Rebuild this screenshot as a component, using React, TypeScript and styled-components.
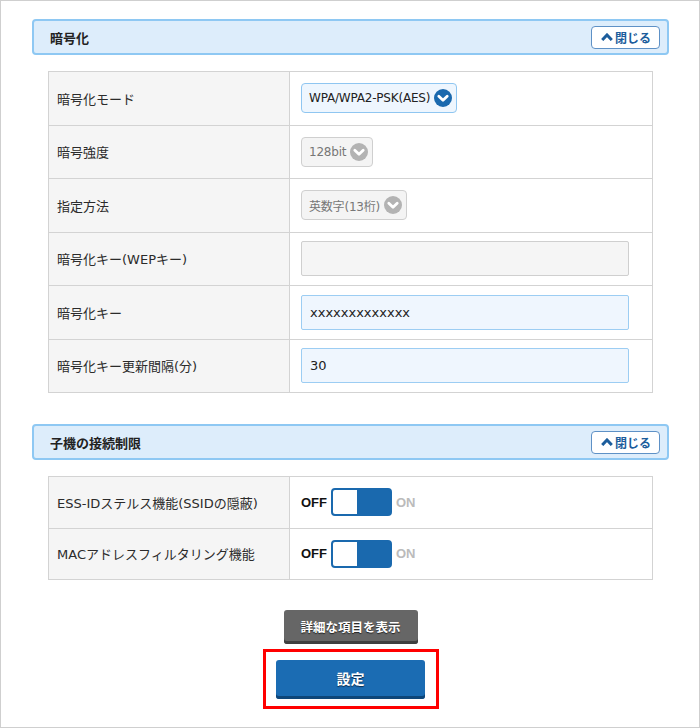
import styled, { createGlobalStyle, css } from 'styled-components';

const GlobalStyle = createGlobalStyle`
  html, body {
    margin: 0;
    padding: 0;
    background: #fff;
  }
  body {
    font-family: 'DejaVu Sans', 'Noto Sans CJK JP', sans-serif;
    color: #333;
  }
`;

const encRows = [
  { label: '暗号化モード', kind: 'select', value: 'WPA/WPA2-PSK(AES)', active: true },
  { label: '暗号強度', kind: 'select', value: '128bit', active: false },
  { label: '指定方法', kind: 'select', value: '英数字(13桁)', active: false },
  { label: '暗号化キー(WEPキー)', kind: 'input', value: '', active: false },
  { label: '暗号化キー', kind: 'input', value: 'xxxxxxxxxxxxx', active: true },
  { label: '暗号化キー更新間隔(分)', kind: 'input', value: '30', active: true },
];

const limitRows = ['ESS-IDステルス機能(SSIDの隠蔽)', 'MACアドレスフィルタリング機能'];

function ChevronCircle({ active }: { active: boolean }) {
  return (
    <svg width="18" height="18" viewBox="0 0 18 18">
      <circle cx="9" cy="9" r="9" fill={active ? '#1a69ae' : '#b3b3b3'} />
      <path
        d="M4.8 7.2 L9 11.2 L13.2 7.2"
        fill="none"
        stroke="#fff"
        strokeWidth="2.8"
        strokeLinecap="round"
        strokeLinejoin="round"
      />
    </svg>
  );
}

function Section({
  title,
  rowHeight,
  children,
}: {
  title: string;
  rowHeight: number;
  children: React.ReactNode;
}) {
  return (
    <SectionWrap>
      <Header>
        <Title>{title}</Title>
        <CloseBtn>
          <svg width="12" height="8" viewBox="0 0 12 8">
            <path
              d="M1.2 7 L6 2 L10.8 7"
              fill="none"
              stroke="#1c5d9c"
              strokeWidth="3"
              strokeLinejoin="miter"
            />
          </svg>
          閉じる
        </CloseBtn>
      </Header>
      <Table $rowHeight={rowHeight}>{children}</Table>
    </SectionWrap>
  );
}

export default function App() {
  return (
    <>
      <GlobalStyle />
      <Frame>
        <Section title="暗号化" rowHeight={52.5}>
          {encRows.map((r) => (
            <Row key={r.label}>
              <Label>{r.label}</Label>
              <Value>
                {r.kind === 'select' ? (
                  <Select $active={r.active}>
                    {r.value}
                    <ChevronCircle active={r.active} />
                  </Select>
                ) : (
                  <TextBox $active={r.active}>{r.value}</TextBox>
                )}
              </Value>
            </Row>
          ))}
        </Section>

        <Section title="子機の接続制限" rowHeight={50.5}>
          {limitRows.map((label) => (
            <Row key={label}>
              <Label>{label}</Label>
              <Value>
                <ToggleWrap>
                  <SwitchText $on>OFF</SwitchText>
                  <Toggle>
                    <Knob />
                  </Toggle>
                  <SwitchText>ON</SwitchText>
                </ToggleWrap>
              </Value>
            </Row>
          ))}
        </Section>

        <Buttons>
          <GrayButton>詳細な項目を表示</GrayButton>
          <Highlight>
            <BlueButton>設定</BlueButton>
          </Highlight>
        </Buttons>
      </Frame>
    </>
  );
}

const Frame = styled.div`
  width: 700px;
  height: 728px;
  box-sizing: border-box;
  border: 1px solid #cfcfcf;
  padding: 18px 30px 0 31px;
  display: flex;
  flex-direction: column;
`;

const SectionWrap = styled.section`
  display: flex;
  flex-direction: column;
  & + & {
    margin-top: 31px;
  }
`;

const Header = styled.div`
  height: 36px;
  box-sizing: border-box;
  border: 2px solid #8ec8f3;
  border-radius: 4px;
  background: #ddedfb;
  display: flex;
  align-items: center;
  justify-content: space-between;
  padding: 0 7px 0 16px;
`;

const Title = styled.h2`
  margin: 0;
  font-size: 13px;
  font-weight: bold;
  color: #222;
`;

const CloseBtn = styled.button`
  width: 69px;
  height: 23px;
  box-sizing: border-box;
  border: 1px solid #5e91c6;
  border-radius: 4px;
  background: #fff;
  display: flex;
  align-items: center;
  justify-content: center;
  gap: 2px;
  padding: 0 0 0 1px;
  font-family: inherit;
  font-size: 12px;
  font-weight: bold;
  color: #1c5d9c;
`;

const Table = styled.div<{ $rowHeight: number }>`
  margin: 16px 0 0 16px;
  width: 605px;
  box-sizing: border-box;
  border: 1px solid #d3d3d3;
  & > div {
    height: ${(p) => p.$rowHeight}px;
  }
`;

const Row = styled.div`
  display: grid;
  grid-template-columns: 241px 1fr;
  & + & {
    border-top: 1px solid #d3d3d3;
    box-sizing: content-box;
  }
`;

const Label = styled.div`
  background: #f5f5f5;
  border-right: 1px solid #d3d3d3;
  display: flex;
  align-items: center;
  padding-left: 8px;
  font-size: 13px;
  color: #2b2b2b;
`;

const Value = styled.div`
  display: flex;
  align-items: center;
  padding-left: 11px;
  background: #fff;
`;

const Select = styled.div<{ $active: boolean }>`
  height: 30px;
  box-sizing: border-box;
  border-radius: 4px;
  display: flex;
  align-items: center;
  gap: 4px;
  padding: 0 4px 0 7px;
  font-size: 12px;
  letter-spacing: -0.2px;
  ${(p) =>
    p.$active
      ? css`
          border: 1px solid #8fc6f1;
          background: #eef6fe;
          color: #222;
        `
      : css`
          border: 1px solid #cfcfcf;
          background: #f4f4f4;
          color: #777;
        `}
`;

const TextBox = styled.div<{ $active: boolean }>`
  width: 328px;
  height: 35px;
  box-sizing: border-box;
  border-radius: 2px;
  display: flex;
  align-items: center;
  padding-left: 8px;
  font-size: 13px;
  color: #222;
  ${(p) =>
    p.$active
      ? css`
          border: 1px solid #9ccdf3;
          background: #eff6fe;
        `
      : css`
          border: 1px solid #cfcfcf;
          background: #f5f5f5;
        `}
`;

const ToggleWrap = styled.div`
  display: flex;
  align-items: center;
  gap: 4px;
`;

const SwitchText = styled.span<{ $on?: boolean }>`
  font-family: 'Liberation Sans', sans-serif;
  font-size: 13px;
  font-weight: bold;
  color: ${(p) => (p.$on ? '#111' : '#bbb')};
`;

const Toggle = styled.div`
  width: 61px;
  height: 28px;
  box-sizing: border-box;
  border: 2px solid #1a69ae;
  border-radius: 4px;
  background: #1a69ae;
  display: flex;
`;

const Knob = styled.div`
  width: 24px;
  height: 24px;
  background: #fff;
  border-radius: 2px 0 0 2px;
`;

const Buttons = styled.div`
  margin-top: 30px;
  display: flex;
  flex-direction: column;
  align-items: center;
`;

const GrayButton = styled.button`
  width: 134px;
  height: 34px;
  border: none;
  border-radius: 3px;
  background: #666;
  box-shadow: inset 0 -3px 0 #3f3f3f;
  font-family: inherit;
  font-size: 12.5px;
  font-weight: bold;
  color: #fff;
  text-shadow: 0 1px 1px #222;
  padding: 0 0 2px;
`;

const Highlight = styled.div`
  margin-top: 5px;
  width: 176px;
  height: 60px;
  box-sizing: border-box;
  border: 3px solid #f00;
  display: flex;
  align-items: center;
  justify-content: center;
`;

const BlueButton = styled.button`
  width: 149px;
  height: 39px;
  border: none;
  border-radius: 3px;
  background: #1b6cb3;
  box-shadow: inset 0 -3px 0 #0e4679;
  font-family: inherit;
  font-size: 14px;
  font-weight: bold;
  color: #fff;
  text-shadow: 0 1px 1px #0a2b4d;
  padding: 0 0 2px;
`;
